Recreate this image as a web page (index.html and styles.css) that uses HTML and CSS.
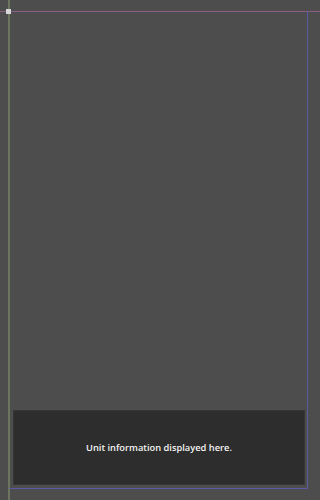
FILE: index.html
```html
<!DOCTYPE html>
<html lang="en">
<head>
<meta charset="utf-8">
<title>Unit info</title>
<link rel="stylesheet" href="styles.css">
</head>
<body>
<div class="stage">
  <div class="guide guide-top"></div>
  <div class="guide guide-left"></div>
  <div class="guide guide-right"></div>
  <div class="guide guide-bottom"></div>
  <div class="origin"></div>
  <div class="info-panel">
    <p class="info-text">Unit information displayed here.</p>
  </div>
</div>
</body>
</html>
```
FILE: styles.css
```css
html, body {
  margin: 0;
  padding: 0;
  height: 100%;
  background: #4d4d4d;
}
.stage {
  position: relative;
  height: 500px;
  display: flex;
  flex-direction: column;
  justify-content: flex-end;
  padding: 0 15px 15px 13px;
  box-sizing: border-box;
  font-family: "Open Sans", "Noto Sans", sans-serif;
}
.info-panel {
  height: 75px;
  background: #2d2d2d;
  border: 1px solid #363636;
  box-sizing: border-box;
  display: flex;
  align-items: center;
  justify-content: center;
}
.info-text {
  margin: 0;
  color: #f4f4f4;
  font-size: 9.3px;
  font-weight: 600;
}
.guide {
  position: absolute;
  z-index: 2;
}
.guide-top {
  left: 0;
  right: 0;
  top: 11px;
  height: 1px;
  background: #8a5f86;
}
.guide-left {
  left: 8px;
  top: 0;
  bottom: 0;
  width: 2px;
  background: #6d7561;
}
.guide-right {
  right: 12px;
  top: 11px;
  height: 478px;
  width: 1px;
  background: #5d58a6;
}
.guide-bottom {
  left: 9px;
  right: 12px;
  top: 488px;
  height: 1px;
  background: #5d58a6;
}
.origin {
  position: absolute;
  z-index: 3;
  left: 6px;
  top: 9px;
  width: 5px;
  height: 5px;
  background: #d8d8d8;
}
```
